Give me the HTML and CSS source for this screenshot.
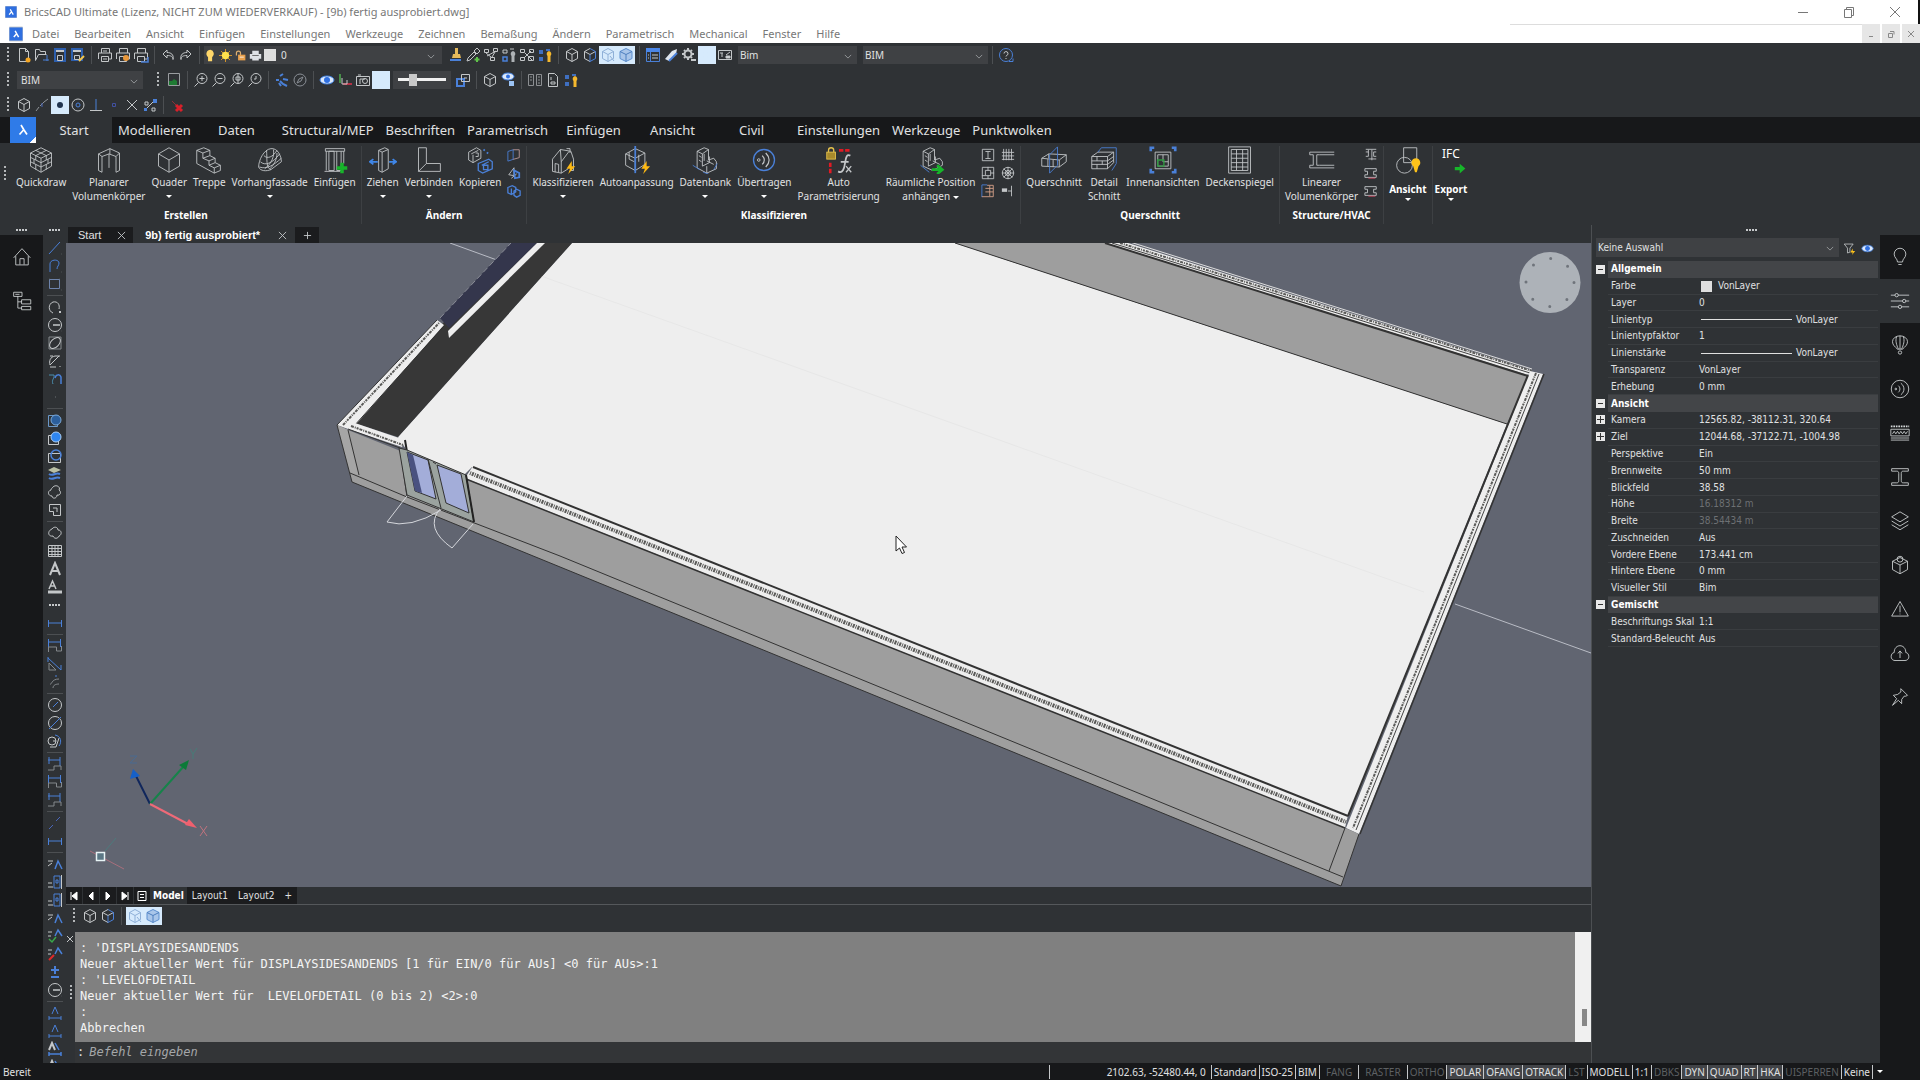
FILE: index.html
```html
<!DOCTYPE html>
<html lang="de">
<head>
    <title>BricsCAD Ultimate</title>
    <meta charset="UTF-8">
    <link rel="stylesheet" href="styles.css">
</head>
<body>

<!-- icon sprite -->
<svg class="sprite">
    <symbol id="logo" viewBox="0 0 16 16"><rect width="16" height="16" rx="1" fill="#2f6fe0"/><path d="M7 4.500l2 3.500M8.500 8l-3 3.500M9 8l2 3.500" stroke="#fff" stroke-width="1.700" fill="none"/></symbol>
    <symbol id="logo-menu" viewBox="0 0 16 16"><path d="M6 3l3 5M8.500 8l-4 4.500M9 8l3 4.500" stroke="#fff" stroke-width="1.700"/></symbol>
    <symbol id="new" viewBox="0 0 16 16"><path d="M3.500 1.500h6l3 3v10h-9zM9.500 1.500v3h3"/><circle cx="12" cy="13" r="2.500" fill="#f5a623" stroke="none"/></symbol>
    <symbol id="open" viewBox="0 0 16 16"><path d="M1.500 13.500v-11h4l1 2h5v3M1.500 13.500l3-6h8"/><path class="b" d="M9 13h6M13 8v6"/></symbol>
    <symbol id="save" viewBox="0 0 16 16"><path d="M3 2h10v12h-10z" stroke="#2d5fae" stroke-width="2"/><path d="M4 4h8" stroke-width="2"/><path d="M5.500 8.500h5v5h-5z"/></symbol>
    <symbol id="saveas" viewBox="0 0 16 16"><path d="M2 2h10v11h-10z" stroke="#2d5fae" stroke-width="2"/><path d="M3 4h8" stroke-width="2"/><path d="M4.500 8.500h5v4h-5z"/><path d="M9 14l5-5" stroke="#f5c84c" stroke-width="2"/></symbol>
    <symbol id="print" viewBox="0 0 16 16"><path d="M4.500 6v-4.500h8v4.500M1.500 12v-6h13v6h-3M4.500 9.500h7v5h-7zM6 4h4M6 12h4"/></symbol>
    <symbol id="preview" viewBox="0 0 16 16"><path d="M4.500 6v-4.500h8v4.500M1.500 12v-6h13v6h-3M4.500 9.500h7v5h-7z"/><circle cx="11" cy="11" r="3" fill="#e8973a" stroke="none"/></symbol>
    <symbol id="plot" viewBox="0 0 16 16"><path d="M4.500 6v-4.500h8v4.500M1.500 12v-6h13v6h-3M4.500 9.500h7v5h-7z"/><path class="b" d="M8 15h7v-5" stroke-width="1.500"/></symbol>
    <symbol id="undo" viewBox="0 0 16 16"><path d="M7 3l-4 4 4 4v-2.500c4 0 6 1 6 4 1-5-2-7-6-7z"/></symbol>
    <symbol id="redo" viewBox="0 0 16 16"><path d="M9 3l4 4-4 4v-2.500c-4 0-6 1-6 4-1-5 2-7 6-7z"/></symbol>
    <symbol id="bulb-on" viewBox="0 0 16 16"><path d="M8 1a5 5 0 0 0-3 9v5h5v-5a5 5 0 0 0-2-9z" fill="#ffd76a" stroke="none"/></symbol>
    <symbol id="sun" viewBox="0 0 16 16"><path d="M8 0v16M0 8h16M2.500 2.500l11 11M13.500 2.500l-11 11" stroke="#f5a623"/><circle cx="8" cy="8" r="4.500" fill="#ffe14d" stroke="none"/></symbol>
    <symbol id="lock" viewBox="0 0 16 16"><path d="M3 8v-3a2.500 2.500 0 0 1 5 0v3" stroke="#e0b070" stroke-width="1.500"/><rect x="5" y="7" width="9" height="7" fill="#e8a04c" stroke="none"/><path d="M7 10h5" stroke="#fff"/></symbol>
    <symbol id="printer" viewBox="0 0 16 16"><path d="M4 2h8v4h3v6h-3v2h-8v-2h-3v-6h3z" fill="#dfe2e6" stroke="none"/><path d="M4 8h8" stroke="#555"/></symbol>
    <symbol id="brush" viewBox="0 0 16 16"><path d="M8 1h3v6h2l1 4h-9l1-4h2z" fill="#e5b95a" stroke="none"/><path class="b" d="M3 13h11" stroke-width="2"/></symbol>
    <symbol id="picker" viewBox="0 0 16 16"><path d="M2 14l1-3 6-6 2 2-6 6zM9 4l3-3 3 3-3 3z"/><path d="M12 10v5M9.500 12.500h5" stroke="#5fc24a" stroke-width="2"/></symbol>
    <symbol id="quads" viewBox="0 0 16 16"><path d="M1.500 2.500h4v3h-4zM10.500 1.500h4v3h-4zM7.500 10.500h4v3h-4zM3 6l5 4M12 5l-3 5M4 9l9-5"/></symbol>
    <symbol id="laybulb" viewBox="0 0 16 16"><path d="M2 3h4v3h-4zM9 2h4"/><path class="b" d="M2 10h4v4h-4z" stroke-width="1.500"/><path d="M12 4a3 3 0 0 0-1.500 5v6h3v-6a3 3 0 0 0-1.500-5z" fill="#aeb2b6" stroke="none"/></symbol>
    <symbol id="laybulby" viewBox="0 0 16 16"><path d="M2 3h4v4h-4zM2 10h4v4h-4z" fill="#3f6fc0" stroke="none"/><path d="M9 2h4v2h-4z" fill="#3f6fc0" stroke="none"/><path d="M12 4a3 3 0 0 0-1.500 5v6h3v-6a3 3 0 0 0-1.500-5z" fill="#f5b82e" stroke="none"/></symbol>
    <symbol id="layers4" viewBox="0 0 16 16"><path d="M1.500 2.500h4v3h-4zM10.500 2.500h4v3h-4zM1.500 10.500h4v3h-4zM6 6l8 8M9.500 9.500h5v4h-5zM5 11l7-7"/></symbol>
    <symbol id="cube" viewBox="0 0 16 16"><path d="M8 1.500l5.500 3v7l-5.500 3-5.500-3v-7zM2.500 4.500l5.500 3 5.500-3M8 7.500v7"/></symbol>
    <symbol id="cubeb" viewBox="0 0 16 16"><path d="M8 1.500l-5.500 3v7l5.500 3M2.500 4.500l5.500 3 5.500-3"/><path class="b" d="M8 1.500l5.500 3v7l-5.500 3M8 7.500v7"/></symbol>
    <symbol id="cubes" viewBox="0 0 16 16"><path d="M8 1.500l5.500 3v7l-5.500 3-5.500-3v-7zM2.500 4.500l5.500 3 5.500-3M8 7.500v7M10 9l4 5" stroke="#8fb0d8"/></symbol>
    <symbol id="cubef" viewBox="0 0 16 16"><path d="M8 1.500l6 3v7l-6 3-6-3v-7z" fill="#a9c6ea" stroke="#5d8fcf"/><path d="M2 4.500l6 3 6-3M8 7.500v7" stroke="#4d7fbf"/></symbol>
    <symbol id="tablei" viewBox="0 0 16 16"><path d="M1 1h14v4h-14z" fill="#4a86e8" stroke="none"/><path class="b" d="M1.500 5v9.500h13v-9.500M5.500 5v9"/><path d="M7 8h6M7 11h6M3 8h1M3 11h1"/></symbol>
    <symbol id="eraser" viewBox="0 0 16 16"><path d="M2 12l7-8 5-2-1 5-7 7z" fill="#dfe6ee" stroke="none"/><path class="b" d="M6 14l8-8" stroke-width="2"/></symbol>
    <symbol id="gear" viewBox="0 0 16 16"><circle cx="7" cy="7" r="3.500" stroke-width="2"/><path d="M7 1v2M7 11v2M1 7h2M11 7h2M3 3l1 1M10 10l1 1M3 11l1-1M11 3l-1 1" stroke-width="2"/><path d="M10 13h5" stroke-width="2"/></symbol>
    <symbol id="dots9" viewBox="0 0 16 16"><path d="M4 6h.1M8 6h.1M12 6h.1M4 10h.1M8 10h.1M12 10h.1" stroke="#cfe6fb"/></symbol>
    <symbol id="panel" viewBox="0 0 16 16"><path d="M1.500 3.500h13v9h-13zM9 8l4-3M5 6v4M3 6h3"/><path d="M9 9h4v2h-4z" fill="#d5d8da"/></symbol>
    <symbol id="help" viewBox="0 0 16 16"><circle class="b" cx="8" cy="8" r="6.500"/><path class="b" d="M11 14.500h4v-3"/><path d="M6 6.500a2 2 0 1 1 2.500 2l-.5 1M8 11v1"/></symbol>
    <symbol id="image" viewBox="0 0 16 16"><path d="M2.500 1.500h11v12h-11z" stroke="#9a9da0"/><path d="M3 13v-4h3l2-2 3 2v4z" fill="#1f7a33" stroke="none"/></symbol>
    <symbol id="zoomin" viewBox="0 0 16 16"><circle cx="9" cy="6.500" r="5"/><path d="M5.500 10.500l-4 4M6.500 6.500h5M9 4v5"/></symbol>
    <symbol id="zoomout" viewBox="0 0 16 16"><circle cx="9" cy="6.500" r="5"/><path d="M5.500 10.500l-4 4M6.500 6.500h5"/></symbol>
    <symbol id="zoomext" viewBox="0 0 16 16"><circle cx="9" cy="6.500" r="5"/><path d="M5.500 10.500l-4 4M7 5h4v3h-4zM9 2v9"/></symbol>
    <symbol id="zoomprev" viewBox="0 0 16 16"><circle cx="9" cy="6.500" r="5"/><path d="M5.500 10.500l-4 4M9 4v3h-2"/></symbol>
    <symbol id="pan" viewBox="0 0 16 16"><path class="b" d="M2 8h3M6 4l3-2M6 9l3 3 4 2M9 7l5 1M5 11l2 3" stroke-width="2"/></symbol>
    <symbol id="orbit" viewBox="0 0 16 16"><circle cx="8" cy="8" r="6" stroke="#8a8f96"/><path d="M5 11l2-4 4-2-2 4z" stroke="#8a8f96"/></symbol>
    <symbol id="eye" viewBox="0 0 16 16"><ellipse cx="8" cy="8" rx="7" ry="4" fill="#dbe8fb" stroke="#3f7fe0"/><circle cx="8" cy="8" r="3" fill="#2f6fe0" stroke="none"/></symbol>
    <symbol id="ucs" viewBox="0 0 16 16"><path d="M3 2v9" stroke="#4fae4f" stroke-width="1.500"/><path d="M6 12h9" stroke="#e0304a" stroke-width="1.500"/><path d="M5 6v6h5v-4"/></symbol>
    <symbol id="camera" viewBox="0 0 16 16"><path d="M1.500 4.500h13v9h-13zM3 3h3M5 12v-5h5"/><circle cx="10" cy="9" r="2.500"/></symbol>
    <symbol id="copyb" viewBox="0 0 16 16"><path class="b" d="M2 7h7v7h-7z" stroke-width="2"/><path d="M6.500 2.500h8v7h-8zM9 6h3"/></symbol>
    <symbol id="eyebox" viewBox="0 0 16 16"><ellipse cx="8" cy="4.500" rx="6" ry="3.500" fill="#dbe8fb" stroke="#3f7fe0"/><path d="M9 9h5v5h-5z" fill="#9cc4f5" stroke="none"/><circle cx="8" cy="4.500" r="2" fill="#2f6fe0" stroke="none"/></symbol>
    <symbol id="columns" viewBox="0 0 16 16"><path d="M1.500 2.500h5v11h-5zM9.500 2.500h5v11h-5zM3 5h2M3 8h2M11 5h2M11 8h2M11 11h2" stroke="#8c8f92"/></symbol>
    <symbol id="page" viewBox="0 0 16 16"><path d="M3.500 1.500h6l3 3v10h-9zM6 10h4v2h-4zM6 5v3"/></symbol>
    <symbol id="line" viewBox="0 0 16 16"><path d="M2 14l11-12" class="b"/><path d="M14 14h.1" stroke-width="2"/></symbol>
    <symbol id="endp" viewBox="0 0 16 16"><path d="M2 14l3-4M6 9l4-4M10 5l4-3" stroke="#8f9499"/><path d="M8 6v4" stroke="#4a66b8"/></symbol>
    <symbol id="point" viewBox="0 0 16 16"><circle cx="8" cy="8" r="3" fill="#20344f" stroke="none"/></symbol>
    <symbol id="center" viewBox="0 0 16 16"><circle cx="8" cy="8" r="6"/><circle class="b" cx="8" cy="8" r="2"/></symbol>
    <symbol id="perp" viewBox="0 0 16 16"><path d="M2 13.500h12"/><path class="b" d="M8 2v11"/></symbol>
    <symbol id="square" viewBox="0 0 16 16"><path d="M6.500 6.500h3v3h-3z" stroke="#4150a0"/></symbol>
    <symbol id="cross" viewBox="0 0 16 16"><path d="M3 3l10 10M13 3l-10 10"/></symbol>
    <symbol id="nearest" viewBox="0 0 16 16"><path d="M3 13l10-10M3 5h3v3h-3zM10 11h3v3h-3z"/><path class="b" d="M12 3h2v2h-2zM3 12h1v1h-1z" stroke-width="2"/></symbol>
    <symbol id="stop" viewBox="0 0 16 16"><path d="M7 8l6 6M7 14l6-6" stroke="#d8202a" stroke-width="3"/><path d="M3 4l4 4" stroke="#8f3038"/></symbol>
    <symbol id="poly" viewBox="0 0 16 16"><path class="b" d="M3 14v-8c0-5 9-5 9-1 0 3-2 3-2 6"/><path d="M14 14h.1" stroke-width="2"/></symbol>
    <symbol id="rect" viewBox="0 0 16 16"><path d="M2.500 3.500h10v9h-10z" stroke="#6d83ab"/><path d="M14 14h.1M2 3h.1M12 3h.1" stroke-width="2"/></symbol>
    <symbol id="arc" viewBox="0 0 16 16"><path d="M6 14c-5-2-5-9 0-11 5-1 7 3 6 7"/><path d="M12 13h2" stroke-width="2"/></symbol>
    <symbol id="circle" viewBox="0 0 16 16"><circle cx="8" cy="8" r="6.500"/><path d="M6 8h7M14 14h.1" stroke-width="1.500"/></symbol>
    <symbol id="ellipse" viewBox="0 0 16 16"><path d="M2 2h12v12h-12z" stroke="#85898d"/><ellipse cx="8" cy="8" rx="6.500" ry="4" transform="rotate(-45 8 8)"/></symbol>
    <symbol id="ellarc" viewBox="0 0 16 16"><path d="M13 3h-5c-5 1-6 5-5 9l9-9M3 14h6M13 13v1M3 3h3"/></symbol>
    <symbol id="spline" viewBox="0 0 16 16"><path d="M2 4h5c1 3-3 5-1 9" stroke="#4b8fb0"/><path class="b" d="M8 7c1-4 5-4 6-1v7" stroke-width="1.500"/></symbol>
    <symbol id="tinydot" viewBox="0 0 16 16"><path d="M8 8h1" stroke="#6c7074"/></symbol>
    <symbol id="union" viewBox="0 0 16 16"><path d="M1.500 3.500h9v11h-9z" stroke="#6b98c8"/><circle cx="9" cy="8" r="5" fill="#2c5f9c" stroke="#7ba9d8"/></symbol>
    <symbol id="subtract" viewBox="0 0 16 16"><path d="M1.500 5.500h10v9h-10z"/><circle cx="9" cy="7" r="5" fill="#2f86f0" stroke="#a9cdf5"/></symbol>
    <symbol id="intersect" viewBox="0 0 16 16"><path d="M1.500 5.500h12v9h-12z"/><circle class="b" cx="9" cy="7" r="5" stroke-width="1.500"/></symbol>
    <symbol id="sheets" viewBox="0 0 16 16"><path d="M1 4l6-3 7 3-7 3z" fill="#b9bfa5" stroke="none"/><path class="b" d="M2 8c4 3 6-2 11 0M2 12c4 3 6-2 11 0" stroke-width="2"/></symbol>
    <symbol id="blob" viewBox="0 0 16 16"><path d="M6 3c3-3 8 0 6 3 3 2 1 6-2 5 0 4-5 4-5 1-4 0-5-5-1-6 0-1 1-2 2-3z"/></symbol>
    <symbol id="notch" viewBox="0 0 16 16"><path d="M2.500 2.500h11v11h-7v-4h-4zM6 6h4v4"/></symbol>
    <symbol id="cloud" viewBox="0 0 16 16"><path d="M5 4c2-3 6-2 6 1 4 0 4 5 1 6-1 3-5 3-6 0-5 1-6-5-1-7z"/></symbol>
    <symbol id="grid" viewBox="0 0 16 16"><path d="M1.500 2.500h13v11h-13zM1.500 5.500h13M1.500 8.500h13M1.500 11.500h13M5 3v11M8 3v11M11 3v11"/></symbol>
    <symbol id="atext" viewBox="0 0 16 16"><path d="M3 14l5-12 5 12M5 10h6" stroke-width="2"/></symbol>
    <symbol id="btext" viewBox="0 0 16 16"><path d="M2 10l3.500-8 3.500 8M3 7h5" stroke-width="1.500"/><path d="M1 13h14" stroke-width="3"/></symbol>
    <symbol id="dimh" viewBox="0 0 16 16"><path class="b" d="M1.500 5v7M14.500 5v7M2 8h12"/></symbol>
    <symbol id="dimlin" viewBox="0 0 16 16"><path class="b" d="M1.500 1v10M13.500 1v8M2 4h12"/><path d="M1.500 14v-5h8v4h5v-5" stroke="#84888c"/></symbol>
    <symbol id="dimal" viewBox="0 0 16 16"><path class="b" d="M1 2l13 12M1 6v-5M14 9v5"/><path d="M2 14v-7l7 7z" stroke="#84888c"/></symbol>
    <symbol id="dimarc" viewBox="0 0 16 16"><path d="M3 10c2 1 1-5 9-5M6 14c0-3 3-4 6-4" stroke="#84888c"/><path class="b" d="M8 2h2"/></symbol>
    <symbol id="dimrad" viewBox="0 0 16 16"><circle cx="8" cy="8" r="6.500"/><path class="b" d="M6 10l5-5"/></symbol>
    <symbol id="dimdia" viewBox="0 0 16 16"><circle cx="8" cy="8" r="6.500"/><path class="b" d="M2 14l12-12"/></symbol>
    <symbol id="dimang" viewBox="0 0 16 16"><circle cx="5" cy="8" r="4"/><path d="M6 8h3M3 14h6l3-9"/><path class="b" d="M8 2c6 1 7 7 4 11"/></symbol>
    <symbol id="dimord" viewBox="0 0 16 16"><path class="b" d="M1 4h12M2 1v7M13 1v9"/><path d="M1 14h6v-4h7v4" stroke="#84888c"/></symbol>
    <symbol id="slash" viewBox="0 0 16 16"><path d="M2 14l4-4M9 6l4-4" stroke="#4a66b8"/></symbol>
    <symbol id="ax" viewBox="0 0 16 16"><path d="M1 5h5M1 10l4-3"/><path class="b" d="M8 13l3-8 4 8" stroke-width="1.500"/></symbol>
    <symbol id="axr" viewBox="0 0 16 16"><path d="M1 4h4M1 8h3"/><path class="b" d="M8 8l3-6 4 6" stroke-width="1.500"/><path d="M2 14l5-5" stroke="#e02a2a" stroke-width="2"/></symbol>
    <symbol id="axg" viewBox="0 0 16 16"><path d="M1 4h4M1 8h3"/><path class="b" d="M8 8l3-6 4 6" stroke-width="1.500"/><path d="M2 11l3 3 4-5" stroke="#3aa84a" stroke-width="1.500"/></symbol>
    <symbol id="boxa" viewBox="0 0 16 16"><path d="M1 9h4M1 13h5M14.500 1v14"/><path class="b" d="M7 2h6v12h-6zM9 6h2v3h-2z"/></symbol>
    <symbol id="plusminus" viewBox="0 0 16 16"><path class="b" d="M8 2v8M4 6h8M4 13h8" stroke-width="2"/></symbol>
    <symbol id="aline" viewBox="0 0 16 16"><path class="b" d="M5 9l3-7 3 7M2 13h12M2 11v4M14 11v4"/></symbol>
    <symbol id="amline" viewBox="0 0 16 16"><path d="M2 9l3-7 3 7" stroke-width="2"/><path class="b" d="M8 2l4 7M2 13h12M2 11v4M14 11v4" stroke-width="1.500"/></symbol>

    <!-- 32px ribbon icons -->
    <symbol id="r-bricks" viewBox="0 0 32 32"><path d="M16 2l12 6v15l-12 7-12-7v-15zM4 8l12 6 12-6M16 14v16M4 13l12 6 12-6M4 18l12 6 12-6M10 11v5M22 11v5M8 15v5M24 15v5M10 21v6M22 21v6M10 5l12 6M22 5l-12 6"/></symbol>
    <symbol id="r-planar" viewBox="0 0 32 32"><path d="M4 9l13-6 11 5v20l-4 2v-18l-8-3-8 3v18l-4-2zM4 9l4 3M28 8l-4 4M16 9v16M17 3v6"/></symbol>
    <symbol id="r-cube" viewBox="0 0 32 32"><path d="M16 2l12 7v14l-12 7-12-7v-14zM4 9l12 7 12-7M16 16v14"/></symbol>
    <symbol id="r-stairs" viewBox="0 0 32 32"><path d="M2 5l8-3 7 3v6l6 3v5l6 3v6l-7 3-20-11zM2 5l7 3 8-3M9 8v6l8-3M9 14l7 3 7-3M16 17v5l7-3M16 22l6 3 7-3M22 25v6"/></symbol>
    <symbol id="r-dome" viewBox="0 0 32 32"><path d="M3 24c0-8 6-20 14-21 8-1 12 9 12 15l-12 9c-5 2-12 2-14-3zM5 18c5 5 14 2 22-9M9 11c4 4 10 2 15-6M12 5c1 10-1 20 5 22M20 4c1 8-2 16-10 22M24 8c0 8-4 14-8 18M4 24c8 3 16-2 25-10"/></symbol>
    <symbol id="r-window" viewBox="0 0 32 32"><path d="M5 3h22v3h-22zM6 6v22M26 6v14M9 6v22h6v-22zM18 6v22h5v-22M4 29h18"/><path d="M24 19v12M18 25h12" stroke="#17b52a" stroke-width="4"/></symbol>
    <symbol id="r-push" viewBox="0 0 32 32"><path d="M11 5l7-3 4 2v22l-7 4-4-2zM11 5l4 2 7-3M15 7v23"/><path d="M10 18h-8M5 15l-4 3 4 3M23 18h7M27 15l4 3-4 3" stroke="#3f86e8" stroke-width="2"/></symbol>
    <symbol id="r-corner" viewBox="0 0 32 32"><path d="M4 2h9v18l-9 9zM13 20h16v9h-25"/></symbol>
    <symbol id="r-copy" viewBox="0 0 32 32"><path d="M3 7l9-5 5 3v9l-9 5-5-3zM6 9l8-4M8 10v9M11 8h3v4h-3"/><path class="b" d="M14 20l12-5 4 3v8l-11 5-5-3zM18 22l8-4M20 22v5h5v-5z" stroke-width="1.500"/><path class="b" d="M20 4l7 6" stroke-width="2" stroke-dasharray="2 3"/></symbol>
    <symbol id="r-house" viewBox="0 0 32 32"><path d="M4 15l9-11 12 2 3 9v13h-4M4 15v14l10 2v-13l9-12M7 30v-10l4 1v9M14 18l-1-14M20 3h4v5M14 31l8-5"/><path d="M26 17l-6 9h4l-2 6 8-9h-4z" fill="#fdb913" stroke="none"/></symbol>
    <symbol id="r-auto" viewBox="0 0 32 32"><path d="M3 9l11-6 11 5v13l-11 7-11-6zM3 9l11 5 11-6M14 14v14M7 7v8l6 3M18 10v8"/><path class="b" d="M14 0v31" stroke-width="2"/><path d="M27 17l-6 9h4l-2 6 8-9h-4z" fill="#fdb913" stroke="none"/></symbol>
    <symbol id="r-data" viewBox="0 0 32 32"><path d="M7 6l8-4 5 2v12l6-2 3 4v8l-11 5-11-6zM7 6l6 3v14l8-4v-7M13 9l7-5M9 11l3 2M9 16l3 2M15 9v8M18 17l8 4M18 23v8"/><path class="b" d="M2 22l8 5M30 20l-4 7M14 30l6 2"/></symbol>
    <symbol id="r-wave" viewBox="0 0 32 32"><circle cx="16" cy="16" r="12" class="b" stroke-width="1.500"/><circle cx="10" cy="16" r="1.500"/><path d="M14 11c3 3 3 7 0 10M18 8c5 5 5 11 0 16" stroke-width="1.500"/></symbol>
    <symbol id="r-fx" viewBox="0 0 32 32"><rect x="2" y="7" width="10" height="8" fill="#a88a2c" stroke="#e5c14c"/><path d="M4 7v-2a3 3 0 0 1 6 0v2" stroke="#e5c14c" stroke-width="1.500"/><path d="M6 19v12M16 5h14" stroke="#e01b24" stroke-width="3" stroke-dasharray="5 2"/><path d="M29 11c-4-2-5 1-6 8s-3 13-8 10M18 18h9" stroke-width="2"/><path d="M24 23l6 7M30 23l-6 7" stroke-width="1.500"/></symbol>
    <symbol id="r-spatial" viewBox="0 0 32 32"><path d="M7 6l8-4 5 2v12l6-2 3 4v4l-11 6-11-5zM7 6l6 3v14l8-4v-7M13 9l7-5M9 11l3 2M9 16l3 2M15 9v8M18 17l8 4"/><path class="b" d="M4 22l10 8"/><path d="M17 27h10M23 22l6 5-6 5" stroke="#17b52a" stroke-width="3"/></symbol>
    <symbol id="r-section" viewBox="0 0 32 32"><path d="M2 14l8-5 20 1v8l-8 6-20-1zM2 14l20 2v8M22 16l8-6M9 15v8M15 16v8M10 9v5"/><path class="b" d="M20 1v21l-9 9v-21z"/></symbol>
    <symbol id="r-detail" viewBox="0 0 32 32"><path d="M2 12h18v14h-18zM2 12l7-5h18l-7 5M27 7v12l-7 7M2 17h18l7-5M2 21h18l7-5M8 12v5M14 17v4M8 21v5"/><path class="b" d="M9 7l4-5h17v18l-5 8"/></symbol>
    <symbol id="r-inner" viewBox="0 0 32 32"><path class="b" d="M2 6v-4h4M26 2h4v4M30 26v4h-4M6 30h-4v-4" stroke-width="3"/><path d="M7 7h18v19h-18zM10 10h12v13h-12zM16 10v8h6"/><path d="M10 16v7h7v-7z" stroke="#2c9a3f" stroke-width="1.500"/></symbol>
    <symbol id="r-ceiling" viewBox="0 0 32 32"><path d="M3 1h25v30h-25zM6 4h19v24h-19zM12 4v24M19 4v24M6 9h19M6 14h19M6 19h19M6 24h19"/></symbol>
    <symbol id="r-linear" viewBox="0 0 32 32"><path d="M2 7h28M2 10h4v12h-4M13 10h17M10 10v12M13 22h17M2 25h28M2 7v3M2 22v3M10 10h3M10 22h3"/></symbol>
    <symbol id="r-shapes" viewBox="0 0 32 32"><circle cx="12" cy="22" r="9"/><path d="M11 2h15v17h-15z"/><path d="M25 14a5 5 0 0 0-3 9l2 7h2l2-7a5 5 0 0 0-3-9z" fill="#fdc21a" stroke="none"/></symbol>
    <symbol id="r-go" viewBox="0 0 32 32"><path d="M2 12h12v-8l14 12-14 12v-8h-12z" fill="#17b52a" stroke="none"/></symbol>
    <symbol id="s-sheet" viewBox="0 0 16 16"><path class="b" d="M1 4l6-2v11l-6 2z"/><path d="M7 2h7v9l-7 2" stroke="#b99"/></symbol>
    <symbol id="s-box" viewBox="0 0 16 16"><path class="b" d="M1 4l5-2 4 2v5l-5 3-4-2zM8 8l3-2 4 2v5l-4 2-3-2zM5 5v6" stroke-width="1.500"/></symbol>
    <symbol id="s-mix" viewBox="0 0 16 16"><path d="M2 10l6-8v9zM5 14l6-5"/><path class="b" d="M8 5l6 3v5l-5 1z" stroke-width="2"/></symbol>
    <symbol id="s-ibeam" viewBox="0 0 16 16"><path d="M1.500 1.500h13v13h-13zM5 4h6M8 4v8M5 12h6"/></symbol>
    <symbol id="s-hatch" viewBox="0 0 16 16"><path d="M1 5h14M1 9h14M3 1v13M6 1v13M9 1v13M12 1v13M1 13h14"/></symbol>
    <symbol id="s-plan" viewBox="0 0 16 16"><path d="M1.500 1.500h13v13h-13zM5 5h6v6h-6zM8 1v4M11 8h4M1 11h4M8 11v4"/></symbol>
    <symbol id="s-wheel" viewBox="0 0 16 16"><circle cx="8" cy="8" r="6.500"/><circle cx="8" cy="8" r="3"/><path d="M8 1v14M1 8h14M3 3l10 10M13 3l-10 10"/></symbol>
    <symbol id="s-orange" viewBox="0 0 16 16"><path class="b" d="M1 15v-14h6"/><path d="M7 1.500h7v13h-13M5 5h9M5 9h9M10 2v12" stroke="#d9a38a"/></symbol>
    <symbol id="s-slide" viewBox="0 0 16 16"><path d="M1 7h6" stroke-width="4"/><path d="M12 2v12M8 8h4"/></symbol>
    <symbol id="s-beam" viewBox="0 0 16 16"><path d="M2 1.500h12M2 4.500h3v5h-3M14 4.500h-3v5h3M5 12.500h9M5 2v3M9 2v12"/></symbol>
    <symbol id="s-beamr" viewBox="0 0 16 16"><path d="M1 3h13v3h-3v4h3v3h-13v-3h3v-4h-3z"/><path d="M5 14h8" stroke="#c2455e"/></symbol>

    <!-- dock icons -->
    <symbol id="d-home" viewBox="0 0 24 24"><path d="M2 13l10-11 10 11M4.500 11v10.500h15v-10.500M9.500 21v-7h5v7"/></symbol>
    <symbol id="d-tree" viewBox="0 0 24 24"><path d="M2 1.500h10v5h-10zM11.500 10.500h11v5h-11zM11.500 18.500h11v4h-11zM7 6v14.500h5M7 13h5M4 4h5"/></symbol>
    <symbol id="d-bulb" viewBox="0 0 24 24"><path d="M9 18c0-4-4-5-4-9.500a7 7 0 0 1 14 0c0 4.500-4 5.500-4 9.500zM10 21h4" /></symbol>
    <symbol id="d-sliders" viewBox="0 0 24 24"><path d="M1 5h5M10 5h13M1 12h14M19 12h4M1 19h9M14 19h9"/><circle cx="8" cy="5" r="2"/><circle cx="17" cy="12" r="2"/><circle cx="12" cy="19" r="2"/></symbol>
    <symbol id="d-balloon" viewBox="0 0 24 24"><path d="M9 17c-3-3-6-5-6-9a9 7 0 0 1 18 0c0 4-3 6-6 9zM12 1v16M8 2c-2 5 0 10 2 15M16 2c2 5 0 10-2 15"/><circle cx="12" cy="21" r="2"/></symbol>
    <symbol id="d-wave" viewBox="0 0 24 24"><circle cx="12" cy="12" r="10.500"/><circle cx="7" cy="12" r="1"/><path d="M10 8c2.500 2 2.500 6 0 8M13 5c5 4 5 10 0 14"/></symbol>
    <symbol id="d-layersec" viewBox="0 0 24 24"><path d="M1 4h22" stroke-dasharray="2 1" stroke-width="2"/><path d="M1 7.500h22v8h-22zM3 13l2-3 2 3 2-3 2 3 2-3 2 3 2-3 2 3 2-3M1 18h22M1 20.500h22"/></symbol>
    <symbol id="d-beam" viewBox="0 0 24 24"><path d="M2 2h20v3h-6c-2 0-2.500 1-2.500 3v8c0 2 .5 3 2.500 3h6v3h-20v-3h6c2 0 2.500-1 2.500-3v-8c0-2-.5-3-2.500-3h-6z"/></symbol>
    <symbol id="d-layers" viewBox="0 0 24 24"><path d="M12 1l10 6-10 6-10-6zM2 12l10 6 10-6M2 16.500l10 6 10-6"/></symbol>
    <symbol id="d-box" viewBox="0 0 24 24"><path d="M12 3l9 4.500v10l-9 5-9-5v-10zM3 7.500l9 4.500 9-4.500M12 12v10"/><circle cx="12" cy="5" r="3.500"/></symbol>
    <symbol id="d-warn" viewBox="0 0 24 24"><path d="M12 3l10 17.500h-20zM12 8v8M12 17.500v1"/></symbol>
    <symbol id="d-upload" viewBox="0 0 24 24"><path d="M6 21c-6 0-6-9-1-9.500 0-11 14-11 14 0 5 .5 5 9.500-1 9.500zM12 18v-8M9.500 12.500l2.500-3 2.500 3"/></symbol>
    <symbol id="d-pin" viewBox="0 0 24 24"><path d="M13 2l8 8-2 1-2 0-3 4 0 5-4-4-7 6 5-8-4-4 5-1 4-3 0-2z"/></symbol>
    <symbol id="chev" viewBox="0 0 10 6"><path d="M1 1l4 4 4-4"/></symbol>
</svg>

<header class="titlebar">
    <svg class="app-logo"><use href="#logo"/></svg>
    <span>BricsCAD Ultimate (Lizenz, NICHT ZUM WIEDERVERKAUF) - [9b) fertig ausprobiert.dwg]</span>
    <div class="window-buttons">
        <button aria-label="Minimieren"><svg viewBox="0 0 12 12"><path d="M1 6.500h10"/></svg></button>
        <button aria-label="Wiederherstellen"><svg viewBox="0 0 12 12"><path d="M1.500 3.500h7v8h-7zM3.500 3v-1.500h7v8h-1.500"/></svg></button>
        <button aria-label="Schließen"><svg viewBox="0 0 12 12"><path d="M1 1l10 10M11 1l-10 10"/></svg></button>
    </div>
</header>

<nav class="menubar">
    <svg class="menu-logo"><use href="#logo"/></svg>
    <button>Datei</button>
    <button>Bearbeiten</button>
    <button>Ansicht</button>
    <button>Einfügen</button>
    <button>Einstellungen</button>
    <button>Werkzeuge</button>
    <button>Zeichnen</button>
    <button>Bemaßung</button>
    <button>Ändern</button>
    <button>Parametrisch</button>
    <button>Mechanical</button>
    <button>Fenster</button>
    <button>Hilfe</button>
    <div class="mdi-line"></div>
    <div class="mdi-buttons">
        <button aria-label="Fenster minimieren"><svg viewBox="0 0 8 8"><path d="M2 6.500h4"/></svg></button>
        <button aria-label="Fenster wiederherstellen"><svg viewBox="0 0 8 8"><path d="M1.500 3.500h4v4h-4zM3 1.500h4v3"/></svg></button>
        <button aria-label="Fenster schließen"><svg viewBox="0 0 8 8"><path d="M1 1l6 6M7 1l-6 6"/></svg></button>
    </div>
</nav>

<div class="toolbars">
    <div class="toolbar">
        <i class="grip"></i>
        <button aria-label="Neu"><svg><use href="#new"/></svg></button>
        <button aria-label="Öffnen"><svg><use href="#open"/></svg></button>
        <button aria-label="Speichern"><svg><use href="#save"/></svg></button>
        <button aria-label="Speichern unter"><svg><use href="#saveas"/></svg></button>
        <i class="sep"></i>
        <button aria-label="Drucken"><svg><use href="#print"/></svg></button>
        <button aria-label="Druckvorschau"><svg><use href="#preview"/></svg></button>
        <button aria-label="Publizieren"><svg><use href="#plot"/></svg></button>
        <i class="sep"></i>
        <button aria-label="Rückgängig"><svg><use href="#undo"/></svg></button>
        <button aria-label="Wiederholen"><svg><use href="#redo"/></svg></button>
        <i class="sep"></i>
        <div class="combo combo-layer">
            <svg><use href="#bulb-on"/></svg><svg><use href="#sun"/></svg><svg><use href="#lock"/></svg><svg><use href="#printer"/></svg>
            <i class="swatch"></i>
            <select aria-label="Layer"><option>0</option></select>
            <svg class="chev"><use href="#chev"/></svg>
        </div>
        <button aria-label="Eigenschaften übertragen"><svg><use href="#brush"/></svg></button>
        <button aria-label="Farbe wählen"><svg><use href="#picker"/></svg></button>
        <button aria-label="Layer isolieren"><svg><use href="#quads"/></svg></button>
        <button aria-label="Layer aus"><svg><use href="#laybulb"/></svg></button>
        <button aria-label="Layer frieren"><svg><use href="#layers4"/></svg></button>
        <button aria-label="Alle Layer ein"><svg><use href="#laybulby"/></svg></button>
        <i class="sep"></i>
        <button aria-label="Drahtmodell"><svg><use href="#cube"/></svg></button>
        <button aria-label="Verdeckt"><svg><use href="#cubeb"/></svg></button>
        <button class="on" aria-label="Seiten anzeigen"><svg><use href="#cubes"/></svg></button>
        <button class="on" aria-label="Detaillierungsgrad"><svg><use href="#cubef"/></svg></button>
        <i class="sep"></i>
        <button aria-label="Zeichnungsexplorer"><svg><use href="#tablei"/></svg></button>
        <button aria-label="Bereinigen"><svg><use href="#eraser"/></svg></button>
        <button aria-label="Einstellungen"><svg><use href="#gear"/></svg></button>
        <button class="on" aria-label="Raster"><svg><use href="#dots9"/></svg></button>
        <button aria-label="Bedienfeld"><svg><use href="#panel"/></svg></button>
        <div class="combo combo-style">
            <select aria-label="Visueller Stil"><option>Bim</option></select>
            <svg class="chev"><use href="#chev"/></svg>
        </div>
        <div class="combo combo-space">
            <select aria-label="Arbeitsbereich"><option>BIM</option></select>
            <svg class="chev"><use href="#chev"/></svg>
        </div>
        <i class="sep"></i>
        <button aria-label="Hilfe"><svg><use href="#help"/></svg></button>
    </div>

    <div class="toolbar">
        <i class="grip"></i>
        <div class="combo combo-profile">
            <select aria-label="Profil"><option>BIM</option></select>
            <svg class="chev"><use href="#chev"/></svg>
        </div>
        <i class="grip grip-mid"></i>
        <button aria-label="Bild"><svg><use href="#image"/></svg></button>
        <i class="sep"></i>
        <button aria-label="Zoom plus"><svg><use href="#zoomin"/></svg></button>
        <button aria-label="Zoom minus"><svg><use href="#zoomout"/></svg></button>
        <button aria-label="Zoom Grenzen"><svg><use href="#zoomext"/></svg></button>
        <button aria-label="Zoom vorher"><svg><use href="#zoomprev"/></svg></button>
        <i class="sep"></i>
        <button aria-label="Pan"><svg><use href="#pan"/></svg></button>
        <button aria-label="Orbit"><svg><use href="#orbit"/></svg></button>
        <i class="sep"></i>
        <button aria-label="Ansicht"><svg><use href="#eye"/></svg></button>
        <button aria-label="BKS"><svg><use href="#ucs"/></svg></button>
        <button aria-label="Kamera"><svg><use href="#camera"/></svg></button>
        <button class="on" aria-label="Perspektive"></button>
        <div class="slider"><input type="range" aria-label="Brennweite" min="0" max="100" value="28"></div>
        <button aria-label="Kopieren"><svg><use href="#copyb"/></svg></button>
        <i class="sep"></i>
        <button aria-label="Isometrisch"><svg><use href="#cube"/></svg></button>
        <button aria-label="Isolieren"><svg><use href="#eyebox"/></svg></button>
        <i class="sep"></i>
        <button aria-label="Spalten"><svg><use href="#columns"/></svg></button>
        <button aria-label="Seite"><svg><use href="#page"/></svg></button>
        <button aria-label="Layerstatus"><svg><use href="#laybulby"/></svg></button>
    </div>

    <div class="toolbar">
        <i class="grip"></i>
        <button aria-label="3D Objektfang"><svg><use href="#cube"/></svg></button>
        <button aria-label="Endpunkt"><svg><use href="#endp"/></svg></button>
        <button class="on" aria-label="Punkt"><svg><use href="#point"/></svg></button>
        <button aria-label="Zentrum"><svg><use href="#center"/></svg></button>
        <button aria-label="Lot"><svg><use href="#perp"/></svg></button>
        <button aria-label="Basispunkt"><svg><use href="#square"/></svg></button>
        <button aria-label="Schnittpunkt"><svg><use href="#cross"/></svg></button>
        <button aria-label="Nächster"><svg><use href="#nearest"/></svg></button>
        <i class="sep"></i>
        <button aria-label="Fang löschen"><svg><use href="#stop"/></svg></button>
    </div>
</div>

<nav class="ribbon-tabs">
    <button class="ribbon-logo" aria-label="Menü"><svg><use href="#logo-menu"/></svg></button>
    <button class="active">Start</button>
    <button>Modellieren</button>
    <button>Daten</button>
    <button>Structural/MEP</button>
    <button>Beschriften</button>
    <button>Parametrisch</button>
    <button>Einfügen</button>
    <button>Ansicht</button>
    <button>Civil</button>
    <button>Einstellungen</button>
    <button>Werkzeuge</button>
    <button>Punktwolken</button>
</nav>

<div class="ribbon">
    <i class="grip grip-ribbon"></i>
    <section class="group">
        <div class="group-body">
            <button><svg><use href="#r-bricks"/></svg><span>Quickdraw</span></button>
            <button><svg><use href="#r-planar"/></svg><span>Planarer<br>Volumenkörper</span></button>
            <button class="drop"><svg><use href="#r-cube"/></svg><span>Quader</span></button>
            <button><svg><use href="#r-stairs"/></svg><span>Treppe</span></button>
            <button class="drop"><svg><use href="#r-dome"/></svg><span>Vorhangfassade</span></button>
            <button><svg><use href="#r-window"/></svg><span>Einfügen</span></button>
        </div>
        <h2>Erstellen</h2>
    </section>
    <section class="group">
        <div class="group-body">
            <button class="drop"><svg><use href="#r-push"/></svg><span>Ziehen</span></button>
            <button class="drop"><svg><use href="#r-corner"/></svg><span>Verbinden</span></button>
            <button><svg><use href="#r-copy"/></svg><span>Kopieren</span></button>
            <div class="small-col">
                <button aria-label="Fläche"><svg><use href="#s-sheet"/></svg></button>
                <button aria-label="Drehen"><svg><use href="#s-mix"/></svg></button>
                <button aria-label="Reihe"><svg><use href="#s-box"/></svg></button>
            </div>
        </div>
        <h2>Ändern</h2>
    </section>
    <section class="group">
        <div class="group-body">
            <button class="drop"><svg><use href="#r-house"/></svg><span>Klassifizieren</span></button>
            <button><svg><use href="#r-auto"/></svg><span>Autoanpassung</span></button>
            <button class="drop"><svg><use href="#r-data"/></svg><span>Datenbank</span></button>
            <button class="drop"><svg><use href="#r-wave"/></svg><span>Übertragen</span></button>
            <button><svg><use href="#r-fx"/></svg><span>Auto<br>Parametrisierung</span></button>
            <button><svg><use href="#r-spatial"/></svg><span>Räumliche Position<br>anhängen <i class="caret"></i></span></button>
            <div class="small-col">
                <button aria-label="Profil"><svg><use href="#s-ibeam"/></svg></button>
                <button aria-label="Grundriss"><svg><use href="#s-plan"/></svg></button>
                <button aria-label="Geschoss"><svg><use href="#s-orange"/></svg></button>
            </div>
            <div class="small-col">
                <button aria-label="Schraffur"><svg><use href="#s-hatch"/></svg></button>
                <button aria-label="Material"><svg><use href="#s-wheel"/></svg></button>
                <button aria-label="Versatz"><svg><use href="#s-slide"/></svg></button>
            </div>
        </div>
        <h2>Klassifizieren</h2>
    </section>
    <section class="group">
        <div class="group-body">
            <button><svg><use href="#r-section"/></svg><span>Querschnitt</span></button>
            <button><svg><use href="#r-detail"/></svg><span>Detail<br>Schnitt</span></button>
            <button><svg><use href="#r-inner"/></svg><span>Innenansichten</span></button>
            <button><svg><use href="#r-ceiling"/></svg><span>Deckenspiegel</span></button>
        </div>
        <h2>Querschnitt</h2>
    </section>
    <section class="group">
        <div class="group-body">
            <button><svg><use href="#r-linear"/></svg><span>Linearer<br>Volumenkörper</span></button>
            <div class="small-col">
                <button aria-label="Profile"><svg><use href="#s-beam"/></svg></button>
                <button aria-label="Träger"><svg><use href="#s-beamr"/></svg></button>
                <button aria-label="Träger trennen"><svg><use href="#s-beamr"/></svg></button>
            </div>
        </div>
        <h2>Structure/HVAC</h2>
    </section>
    <section class="group">
        <button class="collapsed"><svg><use href="#r-shapes"/></svg><span>Ansicht</span><i class="caret"></i></button>
    </section>
    <section class="group group-last">
        <button class="collapsed"><em>IFC</em><svg class="go"><use href="#r-go"/></svg><span>Export</span><i class="caret"></i></button>
    </section>
</div>

<main class="workspace">
    <aside class="dock-col">
        <i class="hgrip"></i>
        <div class="dock">
            <button aria-label="Start"><svg><use href="#d-home"/></svg></button>
            <button aria-label="Struktur"><svg><use href="#d-tree"/></svg></button>
        </div>
    </aside>

    <aside class="draw-tools">
        <i class="hgrip"></i>
        <button aria-label="Linie"><svg><use href="#line"/></svg></button>
        <button aria-label="Polylinie"><svg><use href="#poly"/></svg></button>
        <button aria-label="Rechteck"><svg><use href="#rect"/></svg></button>
        <i class="hsep"></i>
        <button aria-label="Bogen"><svg><use href="#arc"/></svg></button>
        <button aria-label="Kreis"><svg><use href="#circle"/></svg></button>
        <button aria-label="Ellipse"><svg><use href="#ellipse"/></svg></button>
        <button aria-label="Ellipsenbogen"><svg><use href="#ellarc"/></svg></button>
        <button aria-label="Spline"><svg><use href="#spline"/></svg></button>
        <button aria-label="Punkt"><svg><use href="#tinydot"/></svg></button>
        <i class="hsep"></i>
        <button aria-label="Vereinigung"><svg><use href="#union"/></svg></button>
        <button aria-label="Differenz"><svg><use href="#subtract"/></svg></button>
        <button aria-label="Schnittmenge"><svg><use href="#intersect"/></svg></button>
        <button aria-label="Region"><svg><use href="#sheets"/></svg></button>
        <button aria-label="Umgrenzung"><svg><use href="#blob"/></svg></button>
        <button aria-label="Abdecken"><svg><use href="#notch"/></svg></button>
        <i class="hsep"></i>
        <button aria-label="Revisionswolke"><svg><use href="#cloud"/></svg></button>
        <button aria-label="Tabelle"><svg><use href="#grid"/></svg></button>
        <button aria-label="Text"><svg><use href="#atext"/></svg></button>
        <button aria-label="Absatztext"><svg><use href="#btext"/></svg></button>
        <i class="hgrip hgrip-mid"></i>
        <button aria-label="Bemaßung"><svg><use href="#dimh"/></svg></button>
        <i class="hsep"></i>
        <button aria-label="Linear"><svg><use href="#dimlin"/></svg></button>
        <button aria-label="Ausgerichtet"><svg><use href="#dimal"/></svg></button>
        <button aria-label="Bogenlänge"><svg><use href="#dimarc"/></svg></button>
        <i class="hsep"></i>
        <button aria-label="Radius"><svg><use href="#dimrad"/></svg></button>
        <button aria-label="Durchmesser"><svg><use href="#dimdia"/></svg></button>
        <button aria-label="Winkel"><svg><use href="#dimang"/></svg></button>
        <i class="hsep"></i>
        <button aria-label="Basislinie"><svg><use href="#dimord"/></svg></button>
        <button aria-label="Weiter"><svg><use href="#dimlin"/></svg></button>
        <button aria-label="Koordinate"><svg><use href="#dimord"/></svg></button>
        <i class="hsep"></i>
        <button aria-label="Bruch"><svg><use href="#slash"/></svg></button>
        <button aria-label="Abstand"><svg><use href="#dimh"/></svg></button>
        <i class="hsep"></i>
        <button aria-label="Führung"><svg><use href="#ax"/></svg></button>
        <button aria-label="Multiführung"><svg><use href="#boxa"/></svg></button>
        <button aria-label="Führung ausrichten"><svg><use href="#boxa"/></svg></button>
        <button aria-label="Führung sammeln"><svg><use href="#ax"/></svg></button>
        <button aria-label="Führung hinzufügen"><svg><use href="#axg"/></svg></button>
        <button aria-label="Führung entfernen"><svg><use href="#axr"/></svg></button>
        <button aria-label="Toleranz"><svg><use href="#plusminus"/></svg></button>
        <button aria-label="Zentrumsmarke"><svg><use href="#circle"/></svg></button>
        <i class="hsep"></i>
        <button aria-label="Text ausrichten"><svg><use href="#aline"/></svg></button>
        <button aria-label="Text drehen"><svg><use href="#aline"/></svg></button>
        <button aria-label="Bemaßungsstil"><svg><use href="#amline"/></svg></button>
        <button aria-label="Aktualisieren"><svg><use href="#amline"/></svg></button>
    </aside>

    <div class="center">
        <div class="doc-tabs">
            <div class="doc-tab"><button>Start</button><button class="close" aria-label="Schließen"><svg viewBox="0 0 10 10"><path d="M1 1l8 8M9 1l-8 8"/></svg></button></div>
            <div class="doc-tab active"><button>9b) fertig ausprobiert*</button><button class="close" aria-label="Schließen"><svg viewBox="0 0 10 10"><path d="M1 1l8 8M9 1l-8 8"/></svg></button></div>
            <button class="doc-add" aria-label="Neue Zeichnung"><svg viewBox="0 0 10 10"><path d="M5 1v8M1 5h8"/></svg></button>
        </div>

        <!-- model view -->
        <svg class="viewport" viewBox="66 243 1525 644" preserveAspectRatio="xMinYMin slice">
            <path d="M450 243L541 276M1455 604L1591 653" class="axis"/>

            <!-- floor and inner walls -->
            <path d="M572 243L398 437L408 452L464 475L472 467L1348 816L1507 424L955 243z" fill="#eee"/>
            <path d="M541 276L1424 592" stroke="#e7e7e7"/>
            <path d="M955 243L1507 424L1528 375L1105 243z" fill="#9e9e9e"/>
            <path d="M955 243L1507 424" class="edge"/>
            <path d="M354 423L444 322L520 243L572 243L398 437z" fill="#373737"/>
            <path d="M440 318L511 243L537 243L449 328z" fill="#34364c"/>
            <path d="M448 331L537 243L545 243L449 338z" fill="#eee"/>
            <path d="M440 318L511 243" stroke="#8a8c96" stroke-dasharray="6 3"/>

            <!-- back wall top -->
            <path d="M1105 243L1528 375L1531 370L1128 243z" fill="#eee"/>
            <path d="M1112 243L1530 373" stroke="#444"/>
            <path d="M1120 243L1532 371" class="fill-hatch"/>
            <path d="M1105 243L1528 376" stroke="#333" stroke-width="2"/>
            <path d="M1130 242L1532 369" stroke="#ddd"/>

            <!-- right wall top -->
            <path d="M1530 371L1543 374L1359 834L1346 828z" fill="#eee"/>
            <path d="M1528 375L1348 816" stroke="#333" stroke-width="2"/>
            <path d="M1536 373L1353 828" class="fill-hatch"/>
            <path d="M1539 374L1356 830" stroke="#444"/>
            <path d="M1544 374L1360 834" stroke="#333" stroke-width="1.500"/>

            <!-- left wall top -->
            <path d="M337 425L437 320L444 325L351 430z" fill="#eee"/>
            <path d="M337 425L437 320" stroke="#333"/>
            <path d="M343 425L439 323" class="fill-hatch"/>
            <path d="M354 426L444 326" stroke="#333"/>

            <!-- front wall -->
            <path d="M337 425L348 430L1345 828L1359 834L1341 886L352 482z" fill="#9e9e9e"/>
            <path d="M398 437L405 446L408 453L464 476L466 470z" fill="#eee"/>
            <path d="M337 425L348 430L359 475L350 473z" fill="#a5a5a5"/>
            <path d="M473 466L1348 815L1345 828L465 478z" fill="#eee"/>
            <path d="M473 467L1348 816" stroke="#333" stroke-width="2"/>
            <path d="M470 473L1346 822" class="fill-hatch wide"/>
            <path d="M466 479L1345 828" stroke="#333" stroke-width="1.500"/>
            <path d="M352 422L405 440L402 447L348 429z" fill="#eee"/>
            <path d="M351 426L403 445" class="fill-hatch"/>
            <path d="M348 429L400 448L407 497" class="edge"/>
            <path d="M405 440L407 452" stroke="#222" stroke-width="2"/>
            <path d="M337 425L352 482L1341 886L1359 834M350 473L407 497L560 556L1343 877M348 430L359 475M1345 828L1329 871" class="edge"/>

            <!-- entrance doors -->
            <path d="M399 448L407 450L466 475L474 522L407 495z" fill="#9ba39f" stroke="#333"/>
            <path d="M407 452L428 460L436 499L415 491z" fill="#a3add9" stroke="#333"/>
            <path d="M407 452L413 455L422 493L415 491z" fill="#4a5280"/>
            <path d="M437 465L461 474L469 513L446 503z" fill="#a3add9" stroke="#333"/>
            <path d="M428 459L441 508M433 462L436 464" stroke="#333"/>
            <path d="M466 475L474 522" stroke="#222" stroke-width="2"/>
            <path d="M407 496L387 522Q410 529 441 510M440 509Q424 528 452 548L473 524" fill="none" stroke="#d5d7dc"/>

            <!-- compass -->
            <circle cx="1550" cy="282.500" r="30.500" fill="#adb2b8"/>
            <circle cx="1550" cy="282.500" r="24" fill="none" stroke="#6f747b" stroke-width="3" stroke-linecap="round" stroke-dasharray="0 18.850"/>

            <!-- ucs icon -->
            <path d="M150 804L136 776" stroke="#10265c" stroke-width="2"/>
            <path d="M133 769L130 779L140 776z" fill="#1560c8"/>
            <path d="M150 804L184 766" stroke="#16834a" stroke-width="2"/>
            <path d="M189 760L179 765L186 770z" fill="#0c7a38"/>
            <path d="M150 804L188 824" stroke="#ef6a78" stroke-width="2"/>
            <path d="M197 828L189 819L185 825z" fill="#f0606e"/>
            <path d="M200 826L207 836M207 826L200 836" stroke="#c0737e"/>
            <path d="M190 749L193 754L197 748M193 754V759" stroke="#477c78"/>
            <path d="M130 756H137L130 763H137" stroke="#4a6a90"/>
            <path d="M90 851L124 869" stroke="#a86f7c"/>
            <path d="M105 851L116 838" stroke="#4d7a7c"/>
            <rect x="96.500" y="852.500" width="8" height="8" fill="#5c7886" stroke="#e8f4f6" stroke-width="1.500"/>

            <!-- pointer -->
            <path d="M896 536V551L899.500 548L902 553.500L904.500 552.500L902 547H906.500z" fill="#fff" stroke="#222"/>
        </svg>

        <div class="layout-tabs">
            <button class="nav" aria-label="Erstes"><svg viewBox="0 0 10 10"><path d="M2 1v8M8 1l-5 4 5 4z" fill="#fff"/></svg></button>
            <button class="nav" aria-label="Zurück"><svg viewBox="0 0 10 10"><path d="M7 1l-4 4 4 4z" fill="#fff"/></svg></button>
            <button class="nav" aria-label="Weiter"><svg viewBox="0 0 10 10"><path d="M3 1l4 4-4 4z" fill="#fff"/></svg></button>
            <button class="nav" aria-label="Letztes"><svg viewBox="0 0 10 10"><path d="M8 1v8M2 1l5 4-5 4z" fill="#fff"/></svg></button>
            <button class="nav" aria-label="Liste"><svg viewBox="0 0 10 10"><path d="M1 .5h8v9h-8zM3 3.500h4M3 6.500h4" fill="none"/></svg></button>
            <button class="active">Model</button>
            <button>Layout1</button>
            <button>Layout2</button>
            <button class="add">+</button>
        </div>

        <div class="view-toolbar">
            <i class="grip"></i>
            <button aria-label="Drahtmodell"><svg><use href="#cube"/></svg></button>
            <button aria-label="Verdeckt"><svg><use href="#cubeb"/></svg></button>
            <i class="sep"></i>
            <button class="on" aria-label="Seiten anzeigen"><svg><use href="#cubes"/></svg></button>
            <button class="on" aria-label="Detaillierungsgrad"><svg><use href="#cubef"/></svg></button>
        </div>

        <div class="command">
            <div class="command-side">
                <button aria-label="Schließen"><svg viewBox="0 0 6 6"><path d="M0 0l6 6M6 0l-6 6"/></svg></button>
                <i class="grip"></i>
            </div>
            <div class="command-main">
                <div class="command-log">
<pre>: 'DISPLAYSIDESANDENDS
Neuer aktueller Wert für DISPLAYSIDESANDENDS [1 für EIN/0 für AUs] &lt;0 für AUs&gt;:1
: 'LEVELOFDETAIL
Neuer aktueller Wert für  LEVELOFDETAIL (0 bis 2) &lt;2&gt;:0
:
Abbrechen</pre>
                    <div class="scrollbar"><i></i></div>
                </div>
                <label class="command-input">:<input type="text" placeholder="Befehl eingeben"></label>
            </div>
        </div>
    </div>

    <aside class="props">
        <i class="hgrip"></i>
        <div class="props-head">
            <div class="combo combo-selection">
                <select aria-label="Auswahl"><option>Keine Auswahl</option></select>
                <svg class="chev"><use href="#chev"/></svg>
            </div>
            <button aria-label="Schnellauswahl"><svg viewBox="0 0 16 16"><path d="M1.500 2.500h11l-4 5v5l-3 1v-6z"/><path d="M12 8l-3 5h3l-1 3 4-5h-3z" fill="#fdc21a" stroke="none"/></svg></button>
            <button aria-label="Anzeigen"><svg><use href="#eye"/></svg></button>
        </div>
        <table>
            <colgroup><col class="col-box"><col class="col-name"><col></colgroup>
            <tr class="cat"><td><i class="box"></i></td><th colspan="2">Allgemein</th></tr>
            <tr><td></td><th>Farbe</th><td><i class="swatch"></i>VonLayer</td></tr>
            <tr><td></td><th>Layer</th><td>0</td></tr>
            <tr><td></td><th>Linientyp</th><td><i class="sample"></i>VonLayer</td></tr>
            <tr><td></td><th>Linientypfaktor</th><td>1</td></tr>
            <tr><td></td><th>Linienstärke</th><td><i class="sample"></i>VonLayer</td></tr>
            <tr><td></td><th>Transparenz</th><td>VonLayer</td></tr>
            <tr><td></td><th>Erhebung</th><td>0 mm</td></tr>
            <tr class="cat"><td><i class="box"></i></td><th colspan="2">Ansicht</th></tr>
            <tr><td><i class="box plus"></i></td><th>Kamera</th><td>12565.82, -38112.31, 320.64</td></tr>
            <tr><td><i class="box plus"></i></td><th>Ziel</th><td>12044.68, -37122.71, -1004.98</td></tr>
            <tr><td></td><th>Perspektive</th><td>Ein</td></tr>
            <tr><td></td><th>Brennweite</th><td>50 mm</td></tr>
            <tr><td></td><th>Blickfeld</th><td>38.58</td></tr>
            <tr><td></td><th>Höhe</th><td class="off">16.18312 m</td></tr>
            <tr><td></td><th>Breite</th><td class="off">38.54434 m</td></tr>
            <tr><td></td><th>Zuschneiden</th><td>Aus</td></tr>
            <tr><td></td><th>Vordere Ebene</th><td>173.441 cm</td></tr>
            <tr><td></td><th>Hintere Ebene</th><td>0 mm</td></tr>
            <tr><td></td><th>Visueller Stil</th><td>Bim</td></tr>
            <tr class="cat"><td><i class="box"></i></td><th colspan="2">Gemischt</th></tr>
            <tr><td></td><th>Beschriftungs Skal</th><td>1:1</td></tr>
            <tr><td></td><th>Standard-Beleucht</th><td>Aus</td></tr>
        </table>
    </aside>

    <aside class="dock-col dock-right">
        <div class="dock">
            <button aria-label="Tipps"><svg><use href="#d-bulb"/></svg></button>
            <button class="active" aria-label="Eigenschaften"><svg><use href="#d-sliders"/></svg></button>
            <button aria-label="Rendermaterialien"><svg><use href="#d-balloon"/></svg></button>
            <button aria-label="Details"><svg><use href="#d-wave"/></svg></button>
            <button aria-label="Kompositionen"><svg><use href="#d-layersec"/></svg></button>
            <button aria-label="Profile"><svg><use href="#d-beam"/></svg></button>
            <button aria-label="Layer"><svg><use href="#d-layers"/></svg></button>
            <button aria-label="Bibliothek"><svg><use href="#d-box"/></svg></button>
            <button aria-label="Warnungen"><svg><use href="#d-warn"/></svg></button>
            <button aria-label="Cloud"><svg><use href="#d-upload"/></svg></button>
            <button aria-label="Anheften"><svg><use href="#d-pin"/></svg></button>
        </div>
    </aside>
</main>

<footer class="statusbar">
    <span class="ready">Bereit</span>
    <div class="status-items">
        <span class="coords">2102.63, -52480.44, 0</span>
        <button>Standard</button>
        <button>ISO-25</button>
        <button>BIM</button>
        <button class="off wide">FANG</button>
        <button class="off wide">RASTER</button>
        <button class="off">ORTHO</button>
        <button class="on">POLAR</button>
        <button class="on">OFANG</button>
        <button class="on">OTRACK</button>
        <button class="off">LST</button>
        <button>MODELL</button>
        <button>1:1</button>
        <button class="off">DBKS</button>
        <button class="on">DYN</button>
        <button class="on">QUAD</button>
        <button class="on">RT</button>
        <button class="on">HKA</button>
        <button class="off">UISPERREN</button>
        <button>Keine</button>
        <i class="caret"></i>
    </div>
</footer>

</body>
</html>
```

FILE: styles.css
```css
* {
    box-sizing: border-box;
}

body {
    margin: 0;
    height: 100vh;
    display: flex;
    flex-direction: column;
    overflow: hidden;
    background: #2f3235;
    color: #e0e1e2;
    font: 10px/14px "Noto Sans", "Open Sans", sans-serif;
}

button,
select,
input {
    font: inherit;
    color: inherit;
    background: none;
    border: 0;
    padding: 0;
    margin: 0;
}

i {
    font-style: normal;
    flex: none;
}

svg {
    display: block;
    flex: none;
    fill: none;
    stroke: #c4c7c9;
}

.b {
    stroke: #4a80d8;
}

.sprite {
    display: none;
}

/* title and menu */
.titlebar {
    display: flex;
    align-items: center;
    height: 24px;
    padding-left: 5px;
    gap: 7px;
    background: #fff;
    color: #777;
    font-size: 11px;
    flex: none;
}

.app-logo {
    width: 12px;
    height: 12px;
}

.window-buttons {
    display: flex;
    margin-left: auto;
    border-right: 2px solid #111;
    height: 24px;
}

.window-buttons button {
    width: 46px;
    display: flex;
    justify-content: center;
    align-items: center;
}

.window-buttons svg {
    width: 12px;
    height: 12px;
    stroke: #777;
}

.menubar {
    display: flex;
    align-items: center;
    height: 19px;
    padding-left: 9px;
    gap: 15px;
    background: #fff;
    color: #777;
    font-size: 11px;
    flex: none;
}

.menu-logo {
    width: 14px;
    height: 16px;
    margin-right: -6px;
}

.mdi-line {
    width: 352px;
    align-self: stretch;
    margin-left: auto;
    margin-right: -15px;
    border-top: 1px solid #ddd;
}

.mdi-buttons {
    display: flex;
    align-self: stretch;
    gap: 2px;
}

.mdi-buttons button {
    width: 18px;
    background: #e6e6e6;
    display: flex;
    justify-content: center;
    align-items: center;
}

.mdi-buttons svg {
    width: 8px;
    height: 8px;
    stroke: #888;
}

/* toolbars */
.toolbars {
    height: 74px;
    flex: none;
}

.toolbar {
    display: flex;
    align-items: center;
    height: 25px;
    padding-left: 7px;
}

.toolbar:first-child {
    height: 24px;
}

.toolbar button,
.view-toolbar button {
    width: 18px;
    height: 18px;
    padding: 1px;
    flex: none;
}

.toolbar button svg,
.view-toolbar button svg,
.draw-tools button svg {
    width: 16px;
    height: 16px;
}

.toolbar button.on,
.view-toolbar button.on {
    background: #d6eafc;
}

.grip {
    width: 2px;
    height: 16px;
    margin-right: 6px;
    background: repeating-linear-gradient(#b5b8ba 0 2px, transparent 2px 4px);
}

.grip-mid {
    margin: 0 6px 0 14px;
}

.sep {
    width: 1px;
    height: 18px;
    margin: 0 4px;
    background: #4c4f52;
}

.combo {
    position: relative;
    display: flex;
    align-items: center;
    height: 18px;
    background: #3f4144;
    flex: none;
}

.combo select {
    appearance: none;
    flex: 1;
    height: 18px;
    padding: 0 16px 0 2px;
    min-width: 0;
}

.combo .chev {
    position: absolute;
    right: 5px;
    top: 8px;
    width: 8px;
    height: 5px;
    stroke: #a5a8ab;
}

.combo-layer {
    width: 238px;
    margin-right: 4px;
}

.combo-layer > svg {
    width: 13px;
    height: 13px;
    margin-right: 2px;
}

.combo-layer select {
    padding-left: 5px;
}

.combo-layer .swatch {
    width: 12px;
    height: 12px;
    margin: 0;
}

.combo-style {
    width: 119px;
    margin: 0 6px 0 4px;
}

.combo-space {
    width: 125px;
}

.combo-profile {
    width: 126px;
    margin-left: 2px;
}

.combo-profile select {
    padding-left: 4px;
}

.swatch {
    display: inline-block;
    width: 11px;
    height: 11px;
    margin: 0 6px 0 2px;
    background: #dedede;
    vertical-align: middle;
}

.slider {
    width: 58px;
    height: 18px;
    margin: 0 3px;
    padding: 0 5px;
    background: #3f4144;
    display: flex;
    align-items: center;
}

.slider input {
    appearance: none;
    width: 48px;
    height: 3px;
    background: #f0f0f0;
}

.slider input::-webkit-slider-thumb {
    appearance: none;
    width: 8px;
    height: 12px;
    background: #c8c8c8;
}

/* ribbon */
.ribbon-tabs {
    display: flex;
    height: 26px;
    padding-left: 10px;
    background: #17181a;
    font-size: 13px;
    flex: none;
}

.ribbon-tabs button {
    min-width: 79px;
    padding: 0 6px;
}

.ribbon-tabs .active {
    min-width: 76px;
    background: #2f3235;
}

.ribbon-tabs .ribbon-logo {
    min-width: 26px;
    padding: 0;
    background: linear-gradient(135deg, transparent 88%, #fff 88%) #2f7be8;
}

.ribbon-logo svg {
    width: 16px;
    height: 16px;
    margin: 0 auto;
}

.ribbon {
    display: flex;
    height: 82px;
    padding: 3px 0 1px 4px;
    flex: none;
}

.grip-ribbon {
    height: 14px;
    margin: 20px 5px 0 0;
}

.group {
    display: flex;
    flex-direction: column;
    padding: 0 5px;
    border-right: 1px solid #3d4043;
}

.group-last {
    border: 0;
    padding: 0 2px;
}

.group-body {
    display: flex;
    gap: 6px;
    height: 62px;
}

.group h2 {
    margin: 0;
    font-size: 10px;
    line-height: 14px;
    font-weight: bold;
    text-align: center;
    color: #fff;
}

.group-body > button,
.collapsed {
    display: flex;
    flex-direction: column;
    align-items: center;
}

.group-body > button svg,
.collapsed svg {
    width: 28px;
    height: 28px;
    margin-bottom: 1px;
}

.drop::after,
.caret {
    content: "";
    border: 3px solid transparent;
    border-top-color: #fff;
    border-bottom: 0;
}

.drop::after {
    margin-top: 6px;
}

.caret {
    display: inline-block;
    vertical-align: middle;
}

.small-col {
    display: flex;
    flex-direction: column;
    gap: 4px;
    padding-top: 2px;
}

.small-col button,
.small-col svg {
    width: 14px;
    height: 14px;
}

.collapsed {
    font-weight: bold;
    color: #fff;
}

.collapsed span {
    margin: 7px 0 2px;
}

.collapsed em {
    font-size: 12px;
    font-weight: normal;
    font-style: normal;
    line-height: 16px;
}

.collapsed .go {
    width: 13px;
    height: 13px;
    margin: 0;
    align-self: flex-end;
}

/* workspace */
.workspace {
    flex: 1;
    display: flex;
    min-height: 0;
}

.hgrip {
    width: 12px;
    height: 2px;
    background: repeating-linear-gradient(90deg, #c5c8ca 0 2px, transparent 2px 3px);
}

.dock-col {
    display: flex;
    flex-direction: column;
    align-items: center;
    width: 43px;
    padding-top: 4px;
    flex: none;
}

.dock {
    flex: 1;
    align-self: stretch;
    margin-top: 4px;
    background: #17181a;
}

.dock-right {
    width: 40px;
    padding-top: 6px;
}

.dock button {
    display: flex;
    justify-content: center;
    align-items: center;
    width: 100%;
    height: 44px;
}

.dock button.active {
    background: #2f3235;
}

.dock svg {
    width: 20px;
    height: 20px;
    stroke: #d5d8da;
}

.draw-tools {
    display: flex;
    flex-direction: column;
    align-items: center;
    width: 23px;
    padding-top: 4px;
    overflow: hidden;
    flex: none;
}

.draw-tools button {
    width: 18px;
    height: 18px;
    padding: 1px;
    flex: none;
}

.draw-tools .hgrip {
    margin-bottom: 8px;
}

.draw-tools .hgrip-mid {
    margin: 8px 0;
}

.hsep {
    width: 16px;
    height: 1px;
    margin: 2px 0;
    background: #4c4f52;
}

.center {
    flex: 1;
    display: flex;
    flex-direction: column;
    min-width: 0;
}

.doc-tabs {
    display: flex;
    height: 18px;
    padding: 2px 0 0 2px;
    font-family: "Liberation Sans", Arial, sans-serif;
    font-size: 11px;
    flex: none;
}

.doc-tab {
    display: flex;
    align-items: center;
    gap: 16px;
    padding: 0 7px 0 10px;
    background: #1b1c1e;
}

.doc-tab.active {
    gap: 18px;
    padding: 0 8px 0 12px;
    background: none;
    color: #fff;
    font-weight: bold;
}

.doc-tabs svg {
    width: 9px;
    height: 9px;
    margin: 0 auto;
}

.doc-add {
    width: 24px;
    background: #1b1c1e;
}

.viewport {
    flex: 1;
    width: 100%;
    min-height: 0;
    background: #616571;
    stroke: none;
}

.axis {
    stroke: #b9bcc5;
}

.edge {
    fill: none;
    stroke: #333;
}

.fill-hatch {
    stroke: #5a5a58;
    stroke-width: 2;
    stroke-dasharray: 3 1 1 1 2 1;
}

.fill-hatch.wide {
    stroke-width: 4;
    stroke-dasharray: 1 1 2 1;
}

.layout-tabs {
    display: flex;
    height: 18px;
    border-bottom: 1px solid #55585b;
    font-family: "DejaVu Sans Condensed", "DejaVu Sans", sans-serif;
    flex: none;
}

.layout-tabs button {
    padding: 0 5px;
    background: #1b1c1e;
}

.layout-tabs .nav {
    width: 16px;
    padding: 0 3px;
    margin-right: 1px;
}

.layout-tabs svg {
    width: 10px;
    height: 10px;
    stroke: #fff;
}

.layout-tabs .active {
    background: #2f3235;
    color: #fff;
    font-weight: bold;
    padding: 0 3px 0 2px;
}

.view-toolbar {
    display: flex;
    align-items: center;
    height: 27px;
    padding: 0 0 6px 7px;
    flex: none;
}

.command {
    display: flex;
    height: 131px;
    font: 12px/16px "DejaVu Sans Mono", monospace;
    flex: none;
}

.command-side {
    width: 9px;
    padding: 4px 0 0 1px;
    flex: none;
}

.command-side button,
.command-side svg {
    width: 6px;
    height: 6px;
    display: block;
}

.command-side .grip {
    display: block;
    margin: 43px 0 0 3px;
    height: 14px;
}

.command-main {
    flex: 1;
    display: flex;
    flex-direction: column;
}

.command-log {
    display: flex;
    justify-content: space-between;
    height: 110px;
    background: #808080;
    color: #f4f4f4;
}

.command-log pre {
    margin: 0;
    padding: 8px 0 0 5px;
    font: inherit;
}

.scrollbar {
    width: 16px;
    padding: 77px 0 0 7px;
    background: #f0f0f0;
}

.scrollbar i {
    display: block;
    width: 5px;
    height: 17px;
    background: #888;
}

.command-input {
    flex: 1;
    display: flex;
    align-items: center;
    gap: 5px;
    padding: 0 0 2px 2px;
    background: #333537;
}

.command-input input {
    flex: 1;
    outline: 0;
}

.command-input input::placeholder {
    color: #a5a7a9;
    font-style: italic;
    opacity: 1;
}

/* properties */
.props {
    width: 289px;
    padding: 4px 2px 0 4px;
    display: flex;
    flex-direction: column;
    font-family: "DejaVu Sans Condensed", "DejaVu Sans", sans-serif;
    border-left: 1px solid #4c4f52;
    flex: none;
}

.props > .hgrip {
    align-self: center;
    margin: 0 0 7px 30px;
}

.props-head {
    display: flex;
    align-items: center;
    gap: 2px;
    margin: 0 3px 4px 0;
}

.props-head button,
.props-head button svg {
    width: 16px;
    height: 16px;
}

.props-head button svg {
    width: 13px;
    height: 13px;
    margin: 2px;
}

.combo-selection {
    flex: 1;
    height: 19px;
}

.props table {
    width: 100%;
    height: 386px;
    border-collapse: collapse;
    table-layout: fixed;
    line-height: 15px;
}

.col-box {
    width: 12px;
}

.col-name {
    width: 88px;
}

.props td,
.props th {
    padding: 0 0 0 3px;
    overflow: hidden;
    white-space: nowrap;
    text-align: left;
    font-weight: normal;
    border-bottom: 1px solid #3a3d40;
}

.props td:first-child {
    padding: 0;
    border: 0;
}

.props .cat th {
    background: #434548;
    border-color: #434548;
    font-weight: bold;
    color: #fff;
}

.props td.off {
    color: #6d7073;
}

.box {
    display: block;
    width: 9px;
    height: 9px;
    background: linear-gradient(#333, #333) center / 5px 1px no-repeat #e8e8e8;
}

.box.plus {
    background: linear-gradient(#333, #333) center / 7px 1px no-repeat, linear-gradient(#333, #333) center / 1px 7px no-repeat #e8e8e8;
}

.sample {
    display: inline-block;
    width: 91px;
    height: 1px;
    margin: 0 4px 0 2px;
    background: #e0e0e0;
    vertical-align: middle;
}

/* status bar */
.statusbar {
    display: flex;
    align-items: center;
    height: 17px;
    padding: 0 37px 0 3px;
    background: #17181a;
    flex: none;
}

.status-items {
    display: flex;
    align-items: center;
    margin-left: auto;
}

.status-items button,
.coords {
    padding: 0 2px;
    border-right: 1px solid #c5c7c9;
}

.coords {
    width: 163px;
    padding-right: 5px;
    text-align: right;
    border-left: 1px solid #c5c7c9;
}

.status-items .on {
    background: #424448;
}

.status-items .off {
    color: #5d6063;
}

.status-items .wide {
    padding: 0 6px;
}

.status-items .caret {
    margin-left: 4px;
}
```
